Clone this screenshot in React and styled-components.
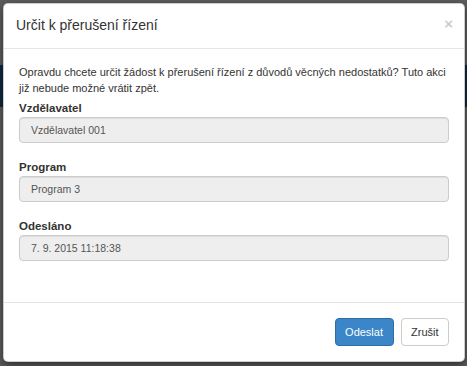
import React from "react";
import styled, { createGlobalStyle } from "styled-components";

const GlobalStyle = createGlobalStyle`
  html, body {
    margin: 0;
    padding: 0;
    background: #5c5c5c;
  }
  * {
    box-sizing: border-box;
  }
`;

const Backdrop = styled.div`
  width: 467px;
  height: 366px;
  padding: 3px 2px 4px 3px;
  background:
    linear-gradient(to bottom,
      transparent 0, transparent 65px,
      #10283f 65px, #10283f 107px,
      transparent 107px),
    #5c5c5c;
  font-family: "Liberation Sans", Arial, sans-serif;
`;

const Modal = styled.div`
  height: 359px;
  background: #fff;
  border: 1px solid rgba(0, 0, 0, 0.2);
  border-radius: 5px;
  box-shadow: 0 3px 9px rgba(0, 0, 0, 0.5);
  display: flex;
  flex-direction: column;
  color: #333;
`;

const Header = styled.div`
  display: flex;
  align-items: center;
  justify-content: space-between;
  padding: 13px 15px 14px 12px;
  border-bottom: 1px solid #e5e5e5;
`;

const Title = styled.h4`
  margin: 0;
  font-size: 14px;
  font-weight: normal;
  line-height: 17px;
  color: #333;
`;

const Close = styled.span`
  font-size: 15px;
  font-weight: bold;
  line-height: 1;
  color: #000;
  opacity: 0.2;
  margin-right: -4px;
  margin-top: -4px;
`;

const Body = styled.div`
  flex: 1;
  padding: 15px 15px 0 15px;
  font-size: 11px;
  line-height: 16px;
`;

const Intro = styled.p`
  margin: 0 0 4px 0;
`;

const Group = styled.div`
  margin-bottom: 16px;
`;

const Label = styled.label`
  display: block;
  font-weight: bold;
  font-size: 11.5px;
  line-height: 16px;
  margin-bottom: 1px;
  color: #333;
`;

const Input = styled.div`
  height: 26px;
  padding: 0 11px;
  display: flex;
  align-items: center;
  background: #eee;
  border: 1px solid #ccc;
  border-radius: 4px;
  box-shadow: inset 0 1px 1px rgba(0, 0, 0, 0.075);
  color: #555;
  font-size: 10.5px;
`;

const Footer = styled.div`
  display: flex;
  justify-content: flex-end;
  gap: 7px;
  padding: 15px;
  border-top: 1px solid #e5e5e5;
`;

const Button = styled.button`
  height: 28px;
  padding: 0 9.5px;
  font-family: inherit;
  font-size: 11px;
  border-radius: 4px;
  border: 1px solid ${({ $primary }) => ($primary ? "#2e6da4" : "#ccc")};
  background: ${({ $primary }) => ($primary ? "#3b86c8" : "#fff")};
  color: ${({ $primary }) => ($primary ? "#fff" : "#333")};
`;

const fields = [
  { label: "Vzdělavatel", value: "Vzdělavatel 001" },
  { label: "Program", value: "Program 3" },
  { label: "Odesláno", value: "7. 9. 2015 11:18:38" },
];

export default function App() {
  return (
    <>
      <GlobalStyle />
      <Backdrop>
        <Modal>
          <Header>
            <Title>Určit k přerušení řízení</Title>
            <Close>×</Close>
          </Header>
          <Body>
            <Intro>
              Opravdu chcete určit žádost k přerušení řízení z důvodů věcných
              nedostatků? Tuto akci již nebude možné vrátit zpět.
            </Intro>
            {fields.map((f) => (
              <Group key={f.label}>
                <Label>{f.label}</Label>
                <Input>{f.value}</Input>
              </Group>
            ))}
          </Body>
          <Footer>
            <Button $primary>Odeslat</Button>
            <Button>Zrušit</Button>
          </Footer>
        </Modal>
      </Backdrop>
    </>
  );
}
